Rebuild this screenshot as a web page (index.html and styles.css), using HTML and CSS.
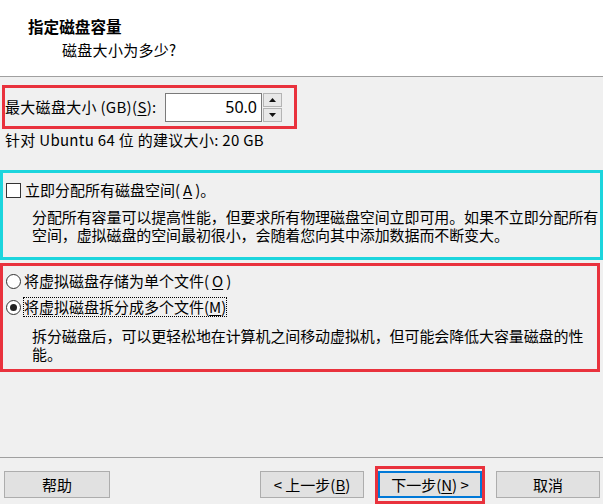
FILE: index.html
```html
<!DOCTYPE html>
<html lang="zh-CN">
<head>
    <meta charset="UTF-8">
    <meta name="viewport" content="width=device-width, initial-scale=1.0">
    <title>新建虚拟机向导</title>
    <link rel="stylesheet" href="styles.css">
</head>
<body>
    <div class="wizard">
        <header class="head">
            <h1>指定磁盘容量</h1>
            <p>磁盘大小为多少?</p>
        </header>

        <main class="content">
            <!-- Disk size -->
            <div class="size-row">
                <label class="size-label" for="diskSize">最大磁盘大小 (GB)(<u>S</u>):</label>
                <div class="spin">
                    <input class="spin-input" id="diskSize" type="text" value="50.0">
                    <div class="spin-btns">
                        <button class="spin-btn"><svg width="7" height="4" viewBox="0 0 7 4"><path d="M0 4L3.5 0L7 4Z"/></svg></button>
                        <button class="spin-btn"><svg width="7" height="4" viewBox="0 0 7 4"><path d="M0 0L3.5 4L7 0Z"/></svg></button>
                    </div>
                </div>
            </div>
            <p class="hint">针对 Ubuntu 64 位 的建议大小: 20 GB</p>

            <!-- Allocate now -->
            <section class="option-box allocate">
                <label class="check-row"><span class="checkbox"></span>立即分配所有磁盘空间(<u>A</u>)。</label>
                <p class="desc">分配所有容量可以提高性能，但要求所有物理磁盘空间立即可用。如果不立即分配所有<br>空间，虚拟磁盘的空间最初很小，会随着您向其中添加数据而不断变大。</p>
            </section>

            <!-- Single or split file -->
            <section class="option-box split">
                <label class="radio-row"><span class="radio"></span>将虚拟磁盘存储为单个文件(<u>O</u>)</label>
                <label class="radio-row second"><span class="radio checked"></span><span class="focus">将虚拟磁盘拆分成多个文件(<u>M</u>)</span></label>
                <p class="desc">拆分磁盘后，可以更轻松地在计算机之间移动虚拟机，但可能会降低大容量磁盘的性<br>能。</p>
            </section>
        </main>

        <footer class="actions">
            <button class="btn help">帮助</button>
            <button class="btn back">&lt; 上一步(<u>B</u>)</button>
            <button class="btn primary">下一步(<u>N</u>) &gt;</button>
            <button class="btn">取消</button>
        </footer>
    </div>
</body>
</html>
```

FILE: styles.css
```css
* {
    box-sizing: border-box;
    margin: 0;
    padding: 0;
}

body {
    background-color: #f0f0f0;
    color: #000;
    font-family: 'Noto Sans CJK SC', sans-serif;
    font-size: 15px;
    line-height: 18px;
}

.wizard {
    display: flex;
    flex-direction: column;
    height: 100vh;
}

.head {
    height: 77px;
    padding: 17px 0 0 28px;
    background: white;
    border-bottom: 1px solid #a0a0a0;
}

.head h1 {
    font-size: 15.6px;
    font-weight: bold;
}

.head p {
    margin: 6px 0 0 34px;
    letter-spacing: 0.3px;
}

.content {
    flex: 1;
}

u {
    text-decoration: underline;
    text-underline-offset: 2px;
}

/* Disk size row */
.size-row {
    display: flex;
    align-items: center;
    width: 295px;
    height: 44px;
    margin: 8px 0 0 2px;
    border: 3px solid #e9323d;
}

.size-label {
    width: 160px;
    letter-spacing: 0.3px;
}

.spin {
    display: flex;
    gap: 1px;
}

.spin-input {
    width: 97px;
    height: 29px;
    padding-right: 4px;
    border: 1px solid #7a7a7a;
    background: white;
    font-family: 'Noto Sans', sans-serif;
    font-size: 16px;
    text-align: right;
}

.spin-btns {
    display: flex;
    flex-direction: column;
    gap: 1px;
}

.spin-btn {
    display: flex;
    align-items: center;
    justify-content: center;
    width: 19px;
    height: 14px;
    background: #e8e8e8;
    border: 1px solid #b4b4b4;
}

.spin-btn svg {
    fill: #111;
}

.hint {
    margin: 2px 0 0 5px;
    letter-spacing: 0.3px;
}

/* Option groups */
.option-box {
    border: 3px solid;
    padding-left: 3px;
}

.allocate {
    width: 603px;
    margin-top: 21px;
    padding-top: 8px;
    padding-bottom: 13px;
    border-color: #1cd5dd;
}

.split {
    width: 600px;
    margin-top: 3px;
    padding-top: 6px;
    padding-bottom: 6px;
    border-color: #e9323d;
}

.check-row,
.radio-row {
    display: flex;
    align-items: center;
    gap: 3px;
    white-space: nowrap;
}

.radio-row.second {
    margin-top: 8px;
}

.checkbox {
    width: 15px;
    height: 15px;
    margin-right: 1px;
    background: white;
    border: 1px solid #333;
}

.radio {
    position: relative;
    width: 15px;
    height: 15px;
    background: white;
    border: 1px solid #333;
    border-radius: 50%;
}

.radio.checked::after {
    content: '';
    position: absolute;
    top: 3px;
    left: 3px;
    width: 7px;
    height: 7px;
    border-radius: 50%;
    background: #222;
}

.focus {
    outline: 1px dotted #000;
    outline-offset: 0;
}

.desc {
    margin: 9px 0 0 26px;
    white-space: nowrap;
    letter-spacing: -0.1px;
}

.split .desc {
    margin-top: 11px;
}

/* Bottom buttons */
.actions {
    display: flex;
    gap: 14px;
    height: 47px;
    padding: 13px 3px 6px 4px;
    border-top: 1px solid #a0a0a0;
}

.btn {
    width: 104px;
    height: 27px;
    background-color: #e1e1e1;
    border: 1px solid #adadad;
    font-family: inherit;
    font-size: 15px;
    color: #000;
}

.help {
    width: 106px;
}

.back {
    margin-left: auto;
}

.primary {
    position: relative;
    border: 2px solid #0078d7;
}

.primary::after {
    content: '';
    position: absolute;
    top: -7px;
    left: -5px;
    right: -5px;
    bottom: -8px;
    border: 3px solid #e9323d;
}
```
